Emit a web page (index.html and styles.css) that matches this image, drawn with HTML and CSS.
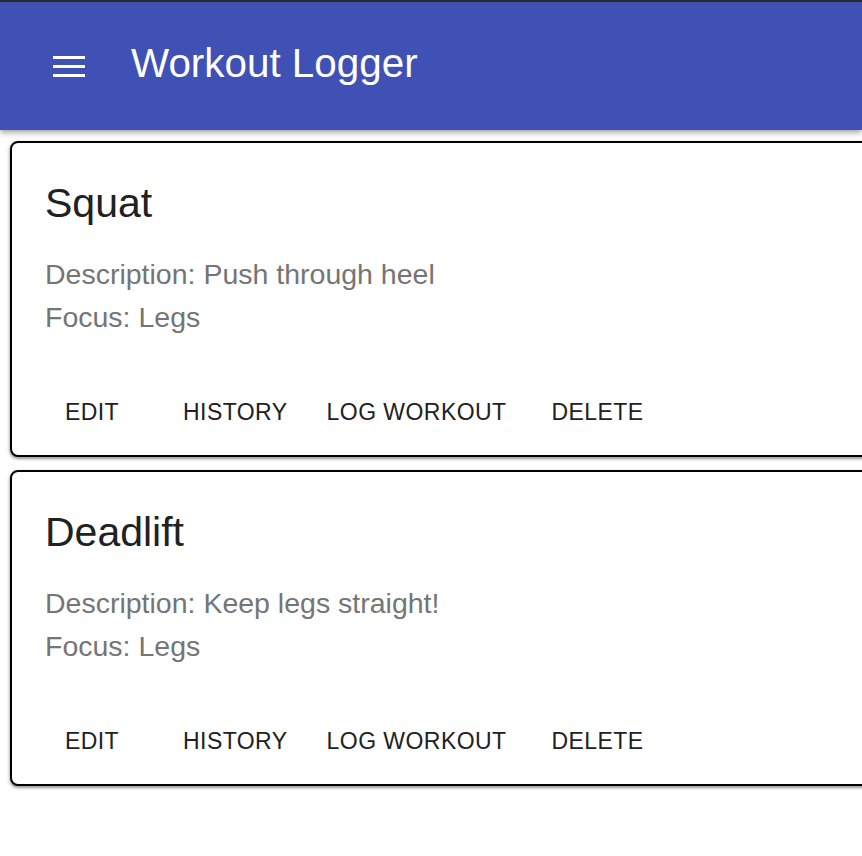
FILE: index.html
```html
<!DOCTYPE html>
<html lang="en">
<head>
<meta charset="utf-8">
<title>Workout Logger</title>
<link rel="stylesheet" href="styles.css">
</head>
<body>
<header class="appbar">
  <button class="menu-btn" aria-label="menu">
    <svg width="32" height="21" viewBox="0 0 32 21" aria-hidden="true">
      <rect x="0" y="0" width="32" height="3" fill="#fff"/>
      <rect x="0" y="9" width="32" height="3" fill="#fff"/>
      <rect x="0" y="18" width="32" height="3" fill="#fff"/>
    </svg>
  </button>
  <h1 class="app-title">Workout Logger</h1>
</header>
<main class="list">
  <section class="card">
    <div class="card-content">
      <h2 class="card-title">Squat</h2>
      <p class="card-text">Description: Push through heel</p>
      <p class="card-text">Focus: Legs</p>
    </div>
    <div class="card-actions">
      <button class="action">EDIT</button>
      <button class="action">HISTORY</button>
      <button class="action">LOG WORKOUT</button>
      <button class="action">DELETE</button>
    </div>
  </section>
  <section class="card">
    <div class="card-content">
      <h2 class="card-title">Deadlift</h2>
      <p class="card-text">Description: Keep legs straight!</p>
      <p class="card-text">Focus: Legs</p>
    </div>
    <div class="card-actions">
      <button class="action">EDIT</button>
      <button class="action">HISTORY</button>
      <button class="action">LOG WORKOUT</button>
      <button class="action">DELETE</button>
    </div>
  </section>
</main>
</body>
</html>
```
FILE: styles.css
```css
html, body {
  margin: 0;
  padding: 0;
  background: #ffffff;
  overflow: hidden;
  font-family: "Liberation Sans", Arial, Helvetica, sans-serif;
}

.appbar {
  display: flex;
  align-items: center;
  height: 128px;
  padding-left: 53px;
  background: #3f51b5;
  border-top: 2px solid #2a2a2a;
  box-shadow: 0 2px 4px -1px rgba(0,0,0,0.2), 0 4px 5px 0 rgba(0,0,0,0.14), 0 1px 10px 0 rgba(0,0,0,0.12);
  position: relative;
  z-index: 1;
}

.menu-btn {
  display: flex;
  padding: 0;
  margin: 0;
  border: 0;
  background: transparent;
  cursor: pointer;
}

.app-title {
  margin: 0 0 6px 46px;
  font-size: 40.4px;
  font-weight: 400;
  line-height: 48px;
  color: #ffffff;
}

.list {
  display: flex;
  flex-direction: column;
  gap: 13px;
  padding: 11px 0 20px 10px;
}

.card {
  width: 900px;
  background: #ffffff;
  border: 2px solid #000000;
  border-radius: 8px;
  box-shadow: 0 2px 3px rgba(0,0,0,0.35), -1px 1px 4px rgba(0,0,0,0.12);
}

.card-content {
  padding: 36px 32px 30px 33px;
}

.card-title {
  margin: 0 0 26px 0;
  font-size: 41px;
  font-weight: 400;
  line-height: 48px;
  color: #212121;
}

.card-text {
  margin: 0;
  font-size: 28.5px;
  line-height: 43px;
  color: #757575;
}

.card-actions {
  display: flex;
  gap: 7px;
  padding: 16px 12px 16px 12px;
}

.action {
  min-width: 136px;
  height: 54px;
  padding: 0 16px;
  border: 0;
  background: transparent;
  font-family: "Liberation Sans", Arial, Helvetica, sans-serif;
  font-size: 23px;
  letter-spacing: 0.45px;
  color: #212121;
  cursor: pointer;
}
```
